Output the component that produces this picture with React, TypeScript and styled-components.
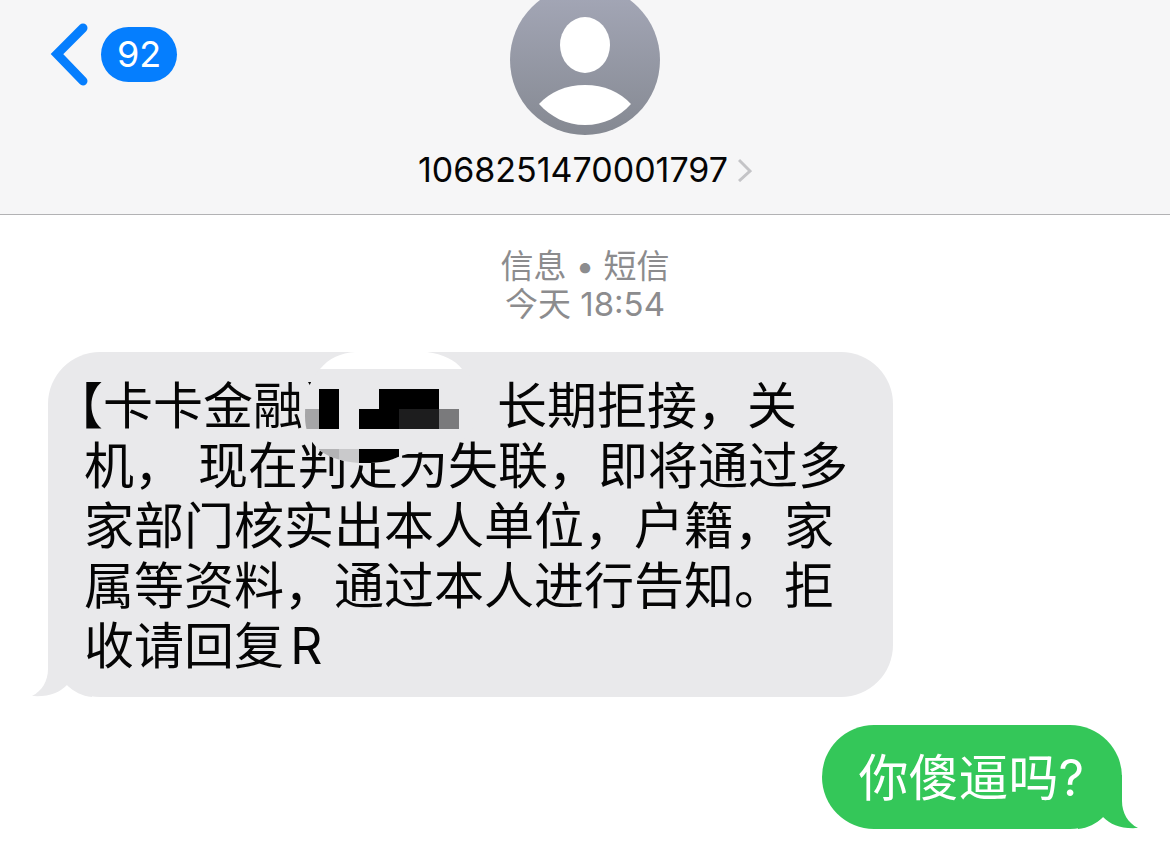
import React from "react";
import styled, { createGlobalStyle } from "styled-components";

const GlobalStyle = createGlobalStyle`
  *, *::before, *::after { box-sizing: border-box; }
  body {
    margin: 0;
    background: #ffffff;
    color: #050505;
    font-family: Inter, "Noto Sans CJK SC", sans-serif;
  }
  button { font: inherit; color: inherit; border: 0; background: none; padding: 0; cursor: pointer; }
`;

const Header = styled.header`
  display: grid;
  grid-template-columns: 1fr auto 1fr;
  align-items: start;
  padding: 0 48px 24px;
  background: #f6f6f7;
  border-bottom: 1px solid #b2b2b4;
  overflow: hidden;
`;

const BackButton = styled.button`
  display: flex;
  align-items: center;
  justify-self: start;
  gap: 12px;
  margin-top: 22px;
`;

const UnreadCount = styled.span`
  padding: 0 16px;
  border-radius: 28px;
  background: #057efe;
  color: #ffffff;
  font-size: 36px;
  line-height: 55px;
`;

const Contact = styled.button`
  display: flex;
  flex-direction: column;
  align-items: center;
  gap: 15px;
  margin-top: -15px;
`;

const ContactName = styled.span`
  display: flex;
  align-items: center;
  gap: 10px;
  font-size: 34px;
  line-height: 40px;
`;

const Thread = styled.main`
  display: flex;
  flex-direction: column;
  padding: 32px 48px 18px;
`;

const Stamp = styled.p`
  margin: 0 0 29px;
  color: #8c8c8e;
  font-size: 33px;
  line-height: 38px;
  text-align: center;
`;

const StampLine = styled.span`
  display: block;
`;

const Bubble = styled.div<{ $sent?: boolean }>`
  position: relative;
  width: fit-content;
  margin: 0 0 28px;
  align-self: ${(p) => (p.$sent ? "flex-end" : "flex-start")};
  padding: ${(p) => (p.$sent ? "23px 38px 21px 36px" : "24px 45px 21px 36px")};
  border-radius: 52px;
  background: ${(p) => (p.$sent ? "#34c759" : "#e9e9eb")};
  color: ${(p) => (p.$sent ? "#ffffff" : "#050505")};
  font-size: 50px;
  line-height: 60px;
`;

const Tail = styled.svg<{ $sent?: boolean }>`
  position: absolute;
  bottom: 0;
  ${(p) => (p.$sent ? "right: -16px;" : "left: -16px; transform: scaleX(-1);")}
`;

const Text = styled.p`
  position: relative;
  margin: 0;
  text-autospace: normal;
`;

const Line = styled.span<{ $hanging?: boolean }>`
  display: block;
  white-space: nowrap;
  text-indent: ${(p) => (p.$hanging ? "-6px" : "0")};
`;

const Bracket = styled.span`
  font-feature-settings: "halt";
`;

const Redaction = styled.span`
  position: relative;
  z-index: 1;
  display: inline-block;
  width: 194px;
  height: 48px;
  vertical-align: top;
`;

const RedactionArt = styled.svg`
  position: absolute;
  left: 0;
  top: -24px;
`;

function BubbleTail({ sent }: { sent?: boolean }) {
  return (
    <Tail $sent={sent} width="60" height="54" viewBox="0 0 60 54" aria-hidden="true">
      <path d="M0 54H10L24 42Q36 54 60 54V0H0Z" fill="#ffffff" />
      <path
        d="M0 54C10 53 18 49 25 42C33 50 43 54 60 53C50 48 44 38 44 26V0H0Z"
        fill={sent ? "#34c759" : "#e9e9eb"}
      />
    </Tail>
  );
}

function Mosaic() {
  return (
    <Redaction>
      <RedactionArt width="182" height="120" viewBox="304 352 182 120" aria-hidden="true">
        <defs>
          <clipPath id="smudge">
            <path d="M321 369H463C478 380 484 398 478 420C470 442 450 450 425 452C400 454 400 458 388 461C362 466 336 462 320 450C310 440 306 430 306 416C306 396 310 380 321 369Z" />
          </clipPath>
        </defs>
        <path d="M321 369C330 358 342 353 356 352H428C444 354 456 360 463 369Z" fill="#ffffff" />
        <path d="M309 382H314L312 387Z" fill="#050505" />
        <g clipPath="url(#smudge)">
          <path d="M304 369H486V472H304Z" fill="#e9e9eb" />
          <path d="M304 409H320V429H304Z" fill="#a5a5a7" />
          <path d="M320 389H340V429H320ZM380 389H440V409H400V429H360V409H380ZM360 449H400V472H360Z" fill="#000000" />
          <path d="M400 409H440V429H400Z" fill="#1d1d1e" />
          <path d="M440 409H460V429H440Z" fill="#7a7a7c" />
          <path d="M320 449H340V472H320Z" fill="#b3b3b5" />
          <path d="M340 449H360V472H340Z" fill="#c9c9cb" />
        </g>
      </RedactionArt>
    </Redaction>
  );
}

export default function App() {
  return (
    <>
      <GlobalStyle />
      <Header>
        <BackButton aria-label="92">
          <svg width="41" height="64" viewBox="0 0 41 64" aria-hidden="true">
            <path d="M35 6L9 32L35 59" fill="none" stroke="#057efe" strokeWidth="9" strokeLinecap="round" strokeLinejoin="miter" />
          </svg>
          <UnreadCount>92</UnreadCount>
        </BackButton>
        <Contact>
          <svg width="150" height="150" viewBox="0 0 150 150" aria-hidden="true">
            <defs>
              <linearGradient id="avatar" x1="0" y1="0" x2="0" y2="1">
                <stop offset="0" stopColor="#a5a8b8" />
                <stop offset="1" stopColor="#858992" />
              </linearGradient>
            </defs>
            <circle cx="75" cy="75" r="75" fill="url(#avatar)" />
            <ellipse cx="75" cy="60" rx="25" ry="28" fill="#ffffff" />
            <path d="M29 119C40 107 56 100 75 100C94 100 110 107 121 119C109 132 94 140 75 140C56 140 41 132 29 119Z" fill="#ffffff" />
          </svg>
          <ContactName>
            1068251470001797
            <svg width="14" height="24" viewBox="0 0 14 24" aria-hidden="true">
              <path d="M1 2L12 13L1 23" fill="none" stroke="#c4c4c7" strokeWidth="3" />
            </svg>
          </ContactName>
        </Contact>
      </Header>
      <Thread>
        <Stamp>
          <StampLine>信息 • 短信</StampLine>
          <StampLine>今天 18:54</StampLine>
        </Stamp>
        <Bubble>
          <BubbleTail />
          <Text>
            <Line $hanging>
              <Bracket>【</Bracket>卡卡金融
              <Mosaic />
              长期拒接，关
            </Line>
            <Line>机， 现在判定为失联，即将通过多</Line>
            <Line>家部门核实出本人单位，户籍，家</Line>
            <Line>属等资料，通过本人进行告知。拒</Line>
            <Line>收请回复R</Line>
          </Text>
        </Bubble>
        <Bubble $sent>
          <BubbleTail sent />
          <Text>你傻逼吗?</Text>
        </Bubble>
      </Thread>
    </>
  );
}
